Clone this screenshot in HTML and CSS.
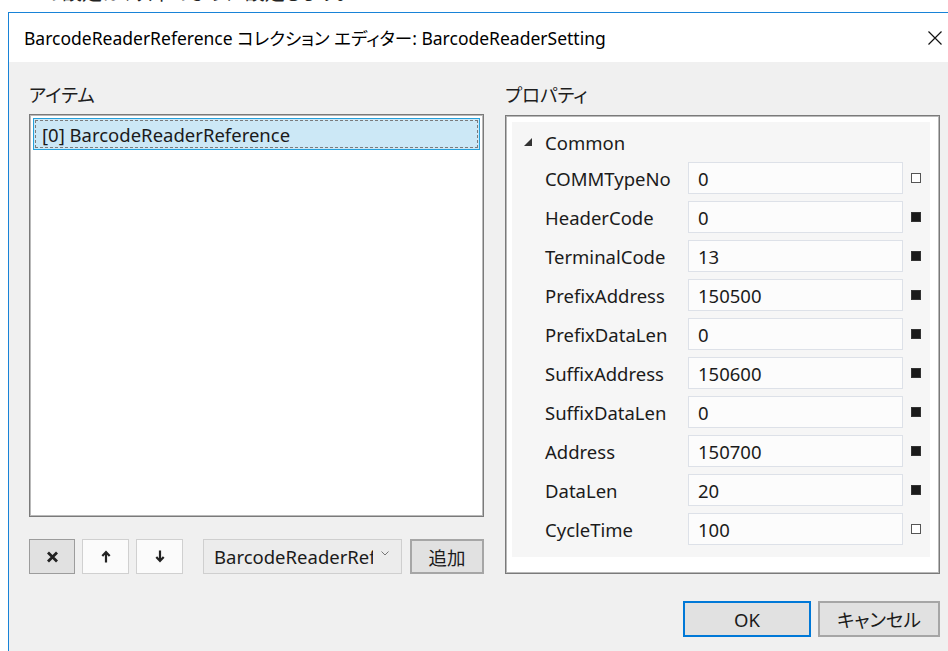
FILE: index.html
```html
<!DOCTYPE html>
<html lang="ja">
<head>
<meta charset="utf-8">
<title>コレクション エディター</title>
<link rel="stylesheet" href="styles.css">
</head>
<body>
<div class="lead"><span>ノートの設定は、以下のように設定します。</span></div>

<div class="window">
  <div class="titlebar">
    <span class="title">BarcodeReaderReference コレクション エディター: BarcodeReaderSetting</span>
    <svg class="close" width="16" height="16" viewBox="0 0 16 16"><path d="M1.5 1.5L14.5 14.5M14.5 1.5L1.5 14.5" stroke="#111" stroke-width="1.2" fill="none"/></svg>
  </div>

  <div class="client">
    <div class="columns">
      <section class="col">
        <div class="label">アイテム</div>
        <div class="listbox">
          <div class="item selected"><span>[0] BarcodeReaderReference</span></div>
        </div>
        <div class="toolbar">
          <button class="tb pressed" type="button">
            <svg width="13" height="12" viewBox="0 0 13 12"><path d="M2 1.5L11 10.5M11 1.5L2 10.5" stroke="#222" stroke-width="2.8" fill="none"/></svg>
          </button>
          <button class="tb" type="button">
            <svg width="10" height="13" viewBox="0 0 10 13"><path d="M5 12.5V2.5M1.3 6L5 2L8.7 6" stroke="#222" stroke-width="2.2" fill="none"/></svg>
          </button>
          <button class="tb" type="button">
            <svg width="10" height="13" viewBox="0 0 10 13"><path d="M5 0.5V10.5M1.3 7L5 11L8.7 7" stroke="#222" stroke-width="2.2" fill="none"/></svg>
          </button>
          <div class="combo">
            <span class="combo-text">BarcodeReaderReference</span>
            <svg class="chev" width="8" height="5" viewBox="0 0 8 5"><path d="M0.5 0.5L4 4L7.5 0.5" stroke="#777" stroke-width="1" fill="none"/></svg>
          </div>
          <button class="btn add" type="button">追加</button>
        </div>
      </section>

      <section class="col">
        <div class="label">プロパティ</div>
        <div class="propbox">
          <div class="grid">
            <div class="group">
              <svg width="8" height="8" viewBox="0 0 8 8"><polygon points="8,0 8,8 0,8" fill="#333"/></svg>
              <span>Common</span>
            </div>
            <div class="rows">
              <div class="row"><span class="name">COMMTypeNo</span><span class="val">0</span><i class="mark"></i></div>
              <div class="row"><span class="name">HeaderCode</span><span class="val">0</span><i class="mark set"></i></div>
              <div class="row"><span class="name">TerminalCode</span><span class="val">13</span><i class="mark set"></i></div>
              <div class="row"><span class="name">PrefixAddress</span><span class="val">150500</span><i class="mark set"></i></div>
              <div class="row"><span class="name">PrefixDataLen</span><span class="val">0</span><i class="mark set"></i></div>
              <div class="row"><span class="name">SuffixAddress</span><span class="val">150600</span><i class="mark set"></i></div>
              <div class="row"><span class="name">SuffixDataLen</span><span class="val">0</span><i class="mark set"></i></div>
              <div class="row"><span class="name">Address</span><span class="val">150700</span><i class="mark set"></i></div>
              <div class="row"><span class="name">DataLen</span><span class="val">20</span><i class="mark set"></i></div>
              <div class="row"><span class="name">CycleTime</span><span class="val">100</span><i class="mark"></i></div>
            </div>
          </div>
        </div>
      </section>
    </div>

    <div class="footer">
      <button class="btn ok" type="button">OK</button>
      <button class="btn cancel" type="button">キャンセル</button>
    </div>
  </div>
</div>
</body>
</html>
```

FILE: styles.css
```css
* { box-sizing: border-box; }

html, body {
  margin: 0;
  padding: 0;
  background: #fff;
  overflow: hidden;
}

body {
  width: 948px;
  height: 651px;
  font-family: "Noto Sans", "Noto Sans CJK JP", sans-serif;
  font-size: 18.5px;
  font-feature-settings: "palt";
  color: #1b1b1b;
}

/* sentence of the document behind the dialog, mostly scrolled out of view */
.lead {
  height: 12px;
  overflow: hidden;
  white-space: nowrap;
}
.lead span {
  display: block;
  margin-top: -20px;
  margin-left: -8px;
  font-size: 20px;
  line-height: 26px;
  color: #222;
}

/* dialog window */
.window {
  margin-left: 8px;
  height: 639px;
  border-left: 1px solid #1883d7;
  border-top: 1px solid #1883d7;
  display: flex;
  flex-direction: column;
}

.titlebar {
  height: 49px;
  flex: none;
  background: #fff;
  display: flex;
  align-items: center;
  padding-left: 15px;
  padding-right: 4px;
}
.title {
  flex: 1;
  font-size: 17.5px;
  color: #000;
  white-space: nowrap;
}
.close { margin-right: 1px; }

.client {
  flex: 1;
  background: #f0f0f0;
  padding: 16px 8px 0 20px;
}

.columns {
  display: grid;
  grid-template-columns: 455px 435px;
  column-gap: 21px;
}

.col {
  display: flex;
  flex-direction: column;
}

.label {
  height: 36px;
  line-height: 34px;
  color: #1e1e1e;
}

/* item list */
.listbox {
  height: 403px;
  background: #fff;
  border: 1px solid #7a7a7a;
  box-shadow: inset 0 0 0 1px #b9b9b9;
  padding: 3px;
}
.item {
  height: 32px;
  display: flex;
  align-items: center;
  padding-left: 8px;
  white-space: nowrap;
}
.item.selected {
  background: #cce8f6;
  border: 1px solid #26a0da;
  outline: 1px dashed #7b7b7b;
  outline-offset: -3px;
}

.toolbar {
  margin-top: 22px;
  height: 35px;
  display: flex;
  gap: 7px;
}
.tb {
  width: 47px;
  height: 35px;
  padding: 0;
  display: flex;
  align-items: center;
  justify-content: center;
  background: #fbfbfb;
  border: 1px solid #d0d0d0;
}
.tb.pressed {
  width: 46px;
  background: #e1e1e1;
  border: 1px solid #9c9c9c;
}
.combo {
  margin-left: 13px;
  width: 199px;
  height: 35px;
  background: #ececec;
  border: 1px solid #cfcfcf;
  display: flex;
  align-items: center;
  padding-left: 10px;
  padding-right: 12px;
  gap: 8px;
}
.combo-text {
  flex: 1;
  min-width: 0;
  overflow: hidden;
  white-space: nowrap;
}
.chev { flex: none; margin-top: -6px; }

.btn {
  font-family: inherit;
  font-size: 18.5px;
  font-feature-settings: "palt";
  color: #1b1b1b;
  padding: 0;
  background: #e1e1e1;
  border: 2px solid #a6a6a6;
}
.add {
  margin-left: 1px;
  width: 74px;
  height: 35px;
}

/* property grid */
.propbox {
  height: 459px;
  margin-top: 1px;
  background: #fff;
  border: 1px solid #7a7a7a;
  box-shadow: inset 0 0 0 1px #b9b9b9;
  padding: 6px 9px 16px 6px;
}
.grid {
  height: 100%;
  background: #f6f6f6;
}
.group {
  height: 40px;
  display: flex;
  align-items: center;
  padding-left: 12px;
  gap: 13px;
}
.rows {
  display: flex;
  flex-direction: column;
  gap: 7px;
  padding-left: 33px;
}
.row {
  height: 32px;
  display: flex;
  align-items: center;
}
.name {
  width: 143px;
  flex: none;
  white-space: nowrap;
}
.val {
  width: 215px;
  height: 32px;
  flex: none;
  display: flex;
  align-items: center;
  padding-left: 9px;
  background: #fcfcfc;
  border: 1px solid #dde1e8;
}
.mark {
  margin-left: 8px;
  width: 10px;
  height: 10px;
  border: 1px solid #555;
  background: #fff;
}
.mark.set {
  background: #1a1a1a;
  border-color: #333;
}

.footer {
  margin-top: 27px;
  display: flex;
  justify-content: flex-end;
  gap: 7px;
}
.ok {
  width: 128px;
  height: 36px;
  border-color: #0078d7;
}
.cancel {
  width: 122px;
  height: 36px;
}
```
